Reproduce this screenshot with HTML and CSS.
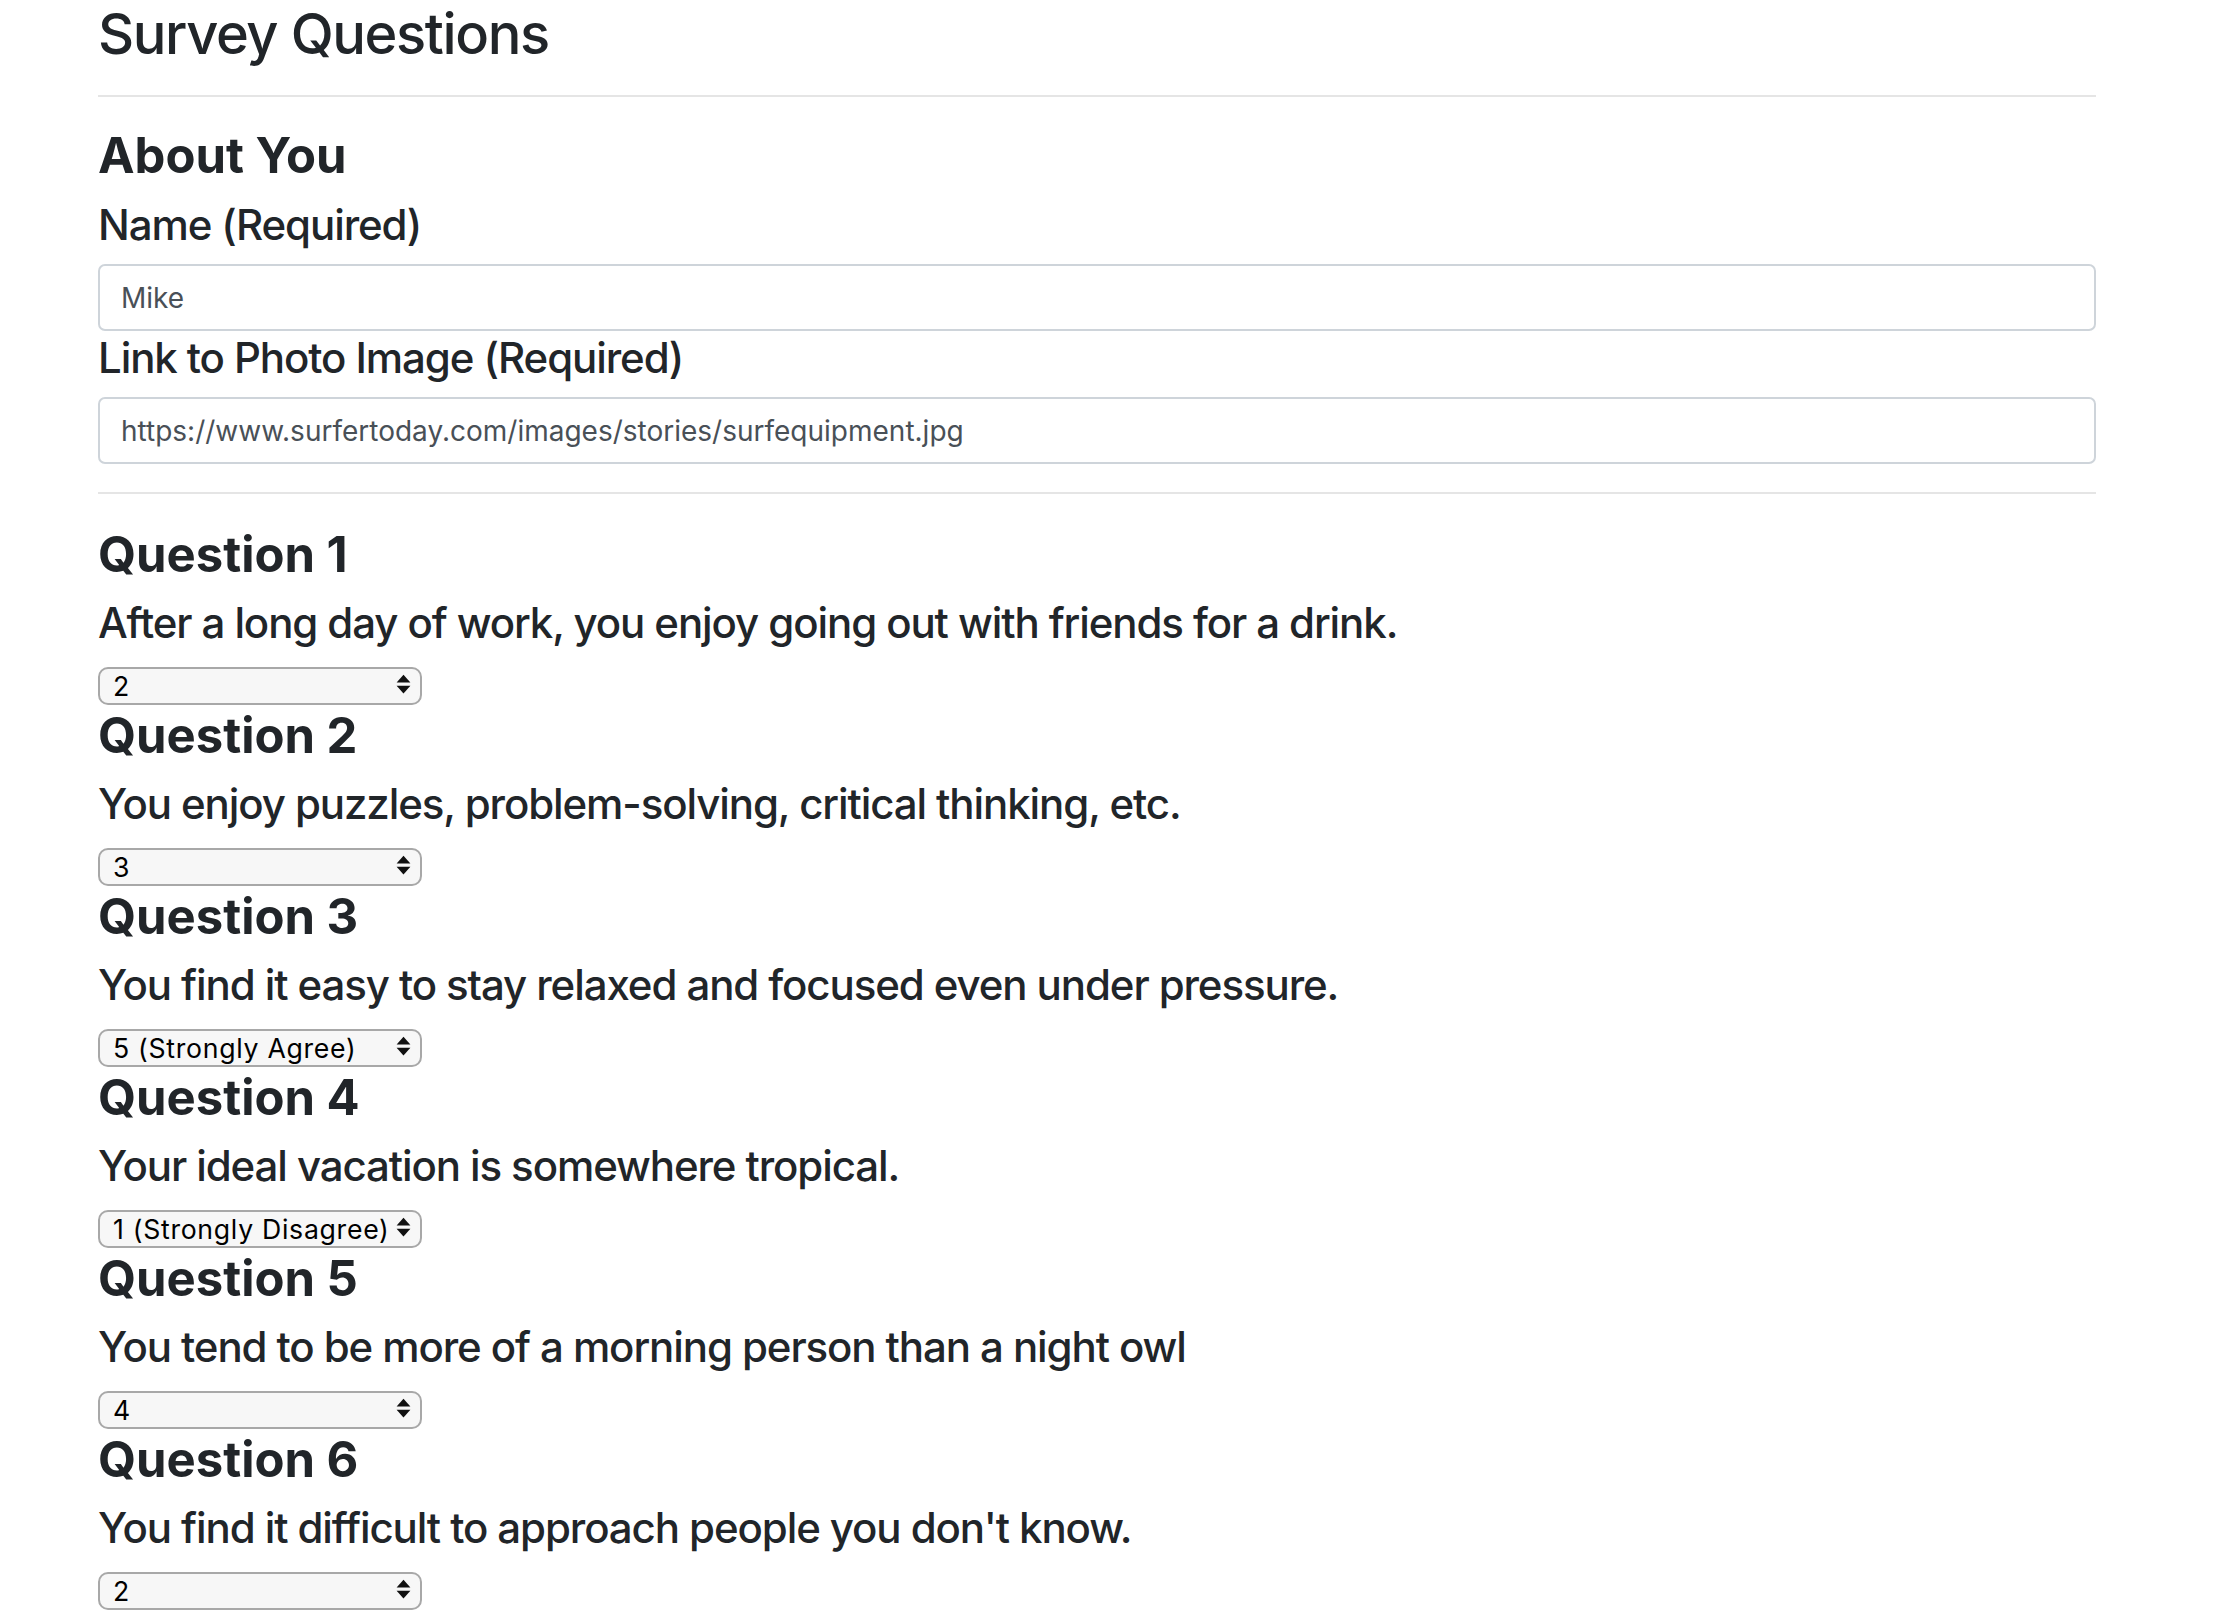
FILE: index.html
```html
<!DOCTYPE html>
<html lang="en">
<head>
<meta charset="utf-8">
<title>Survey Questions</title>
<link rel="stylesheet" href="styles.css">
</head>
<body>
<div class="container">
  <h2 class="page-title">Survey Questions</h2>
  <hr class="rule">
  <h3 class="section-title">About You</h3>
  <h4 class="field-label">Name (Required)</h4>
  <input class="field" type="text" value="Mike">
  <h4 class="field-label">Link to Photo Image (Required)</h4>
  <input class="field" type="text" value="https://www.surfertoday.com/images/stories/surfequipment.jpg">
  <hr class="rule rule-last">

  <div class="question">
    <h3 class="question-title">Question 1</h3>
    <h4 class="question-text">After a long day of work, you enjoy going out with friends for a drink.</h4>
    <div class="select-row">
      <div class="select-wrap">
        <select class="choice">
          <option>1 (Strongly Disagree)</option>
          <option selected>2</option>
          <option>3</option>
          <option>4</option>
          <option>5 (Strongly Agree)</option>
        </select>
        <svg class="arrows" width="15" height="21" viewBox="0 0 15 21"><polygon points="0.6,8.6 7.5,0.8 14.4,8.6"/><polygon points="0.6,11.8 14.4,11.8 7.5,19.6"/></svg>
      </div>
    </div>
  </div>

  <div class="question">
    <h3 class="question-title">Question 2</h3>
    <h4 class="question-text">You enjoy puzzles, problem-solving, critical thinking, etc.</h4>
    <div class="select-row">
      <div class="select-wrap">
        <select class="choice">
          <option>1 (Strongly Disagree)</option>
          <option>2</option>
          <option selected>3</option>
          <option>4</option>
          <option>5 (Strongly Agree)</option>
        </select>
        <svg class="arrows" width="15" height="21" viewBox="0 0 15 21"><polygon points="0.6,8.6 7.5,0.8 14.4,8.6"/><polygon points="0.6,11.8 14.4,11.8 7.5,19.6"/></svg>
      </div>
    </div>
  </div>

  <div class="question">
    <h3 class="question-title">Question 3</h3>
    <h4 class="question-text">You find it easy to stay relaxed and focused even under pressure.</h4>
    <div class="select-row">
      <div class="select-wrap">
        <select class="choice">
          <option>1 (Strongly Disagree)</option>
          <option>2</option>
          <option>3</option>
          <option>4</option>
          <option selected>5 (Strongly Agree)</option>
        </select>
        <svg class="arrows" width="15" height="21" viewBox="0 0 15 21"><polygon points="0.6,8.6 7.5,0.8 14.4,8.6"/><polygon points="0.6,11.8 14.4,11.8 7.5,19.6"/></svg>
      </div>
    </div>
  </div>

  <div class="question">
    <h3 class="question-title">Question 4</h3>
    <h4 class="question-text">Your ideal vacation is somewhere tropical.</h4>
    <div class="select-row">
      <div class="select-wrap">
        <select class="choice">
          <option selected>1 (Strongly Disagree)</option>
          <option>2</option>
          <option>3</option>
          <option>4</option>
          <option>5 (Strongly Agree)</option>
        </select>
        <svg class="arrows" width="15" height="21" viewBox="0 0 15 21"><polygon points="0.6,8.6 7.5,0.8 14.4,8.6"/><polygon points="0.6,11.8 14.4,11.8 7.5,19.6"/></svg>
      </div>
    </div>
  </div>

  <div class="question">
    <h3 class="question-title">Question 5</h3>
    <h4 class="question-text">You tend to be more of a morning person than a night owl</h4>
    <div class="select-row">
      <div class="select-wrap">
        <select class="choice">
          <option>1 (Strongly Disagree)</option>
          <option>2</option>
          <option>3</option>
          <option selected>4</option>
          <option>5 (Strongly Agree)</option>
        </select>
        <svg class="arrows" width="15" height="21" viewBox="0 0 15 21"><polygon points="0.6,8.6 7.5,0.8 14.4,8.6"/><polygon points="0.6,11.8 14.4,11.8 7.5,19.6"/></svg>
      </div>
    </div>
  </div>

  <div class="question">
    <h3 class="question-title">Question 6</h3>
    <h4 class="question-text">You find it difficult to approach people you don't know.</h4>
    <div class="select-row">
      <div class="select-wrap">
        <select class="choice">
          <option>1 (Strongly Disagree)</option>
          <option selected>2</option>
          <option>3</option>
          <option>4</option>
          <option>5 (Strongly Agree)</option>
        </select>
        <svg class="arrows" width="15" height="21" viewBox="0 0 15 21"><polygon points="0.6,8.6 7.5,0.8 14.4,8.6"/><polygon points="0.6,11.8 14.4,11.8 7.5,19.6"/></svg>
      </div>
    </div>
  </div>
</div>
</body>
</html>
```

FILE: styles.css
```css
html, body {
  margin: 0;
  padding: 0;
  background: #ffffff;
}

body {
  font-family: Inter, "Noto Sans", "Liberation Sans", sans-serif;
  color: #212529;
  font-size: 28px;
}

.container {
  width: 1998px;
  padding-left: 98px;
  display: flex;
  flex-direction: column;
}

.page-title {
  margin: 0;
  padding-top: 1px;
  font-size: 56px;
  line-height: 66.2px;
  font-weight: 500;
  letter-spacing: -0.025em;
}

.rule {
  margin: 28px 0;
  border: 0;
  border-top: 2px solid rgba(0, 0, 0, 0.1);
  height: 0;
  width: 100%;
}

.rule-last {
  margin-bottom: 29.5px;
}

.section-title,
.question-title {
  margin: 0 0 14px 0;
  font-size: 49px;
  font-weight: 700;
}

.section-title {
  padding-top: 3px;
  line-height: 55.8px;
}

.question-title {
  padding-top: 3px;
  line-height: 55.8px;
}

.field-label {
  margin: 0 0 14px 0;
  padding-top: 1.5px;
  font-size: 42px;
  line-height: 50.5px;
  font-weight: 500;
  letter-spacing: -0.026em;
}

.field {
  display: block;
  box-sizing: border-box;
  width: 100%;
  height: 67px;
  margin: 0;
  padding: 10px 21px;
  font-family: inherit;
  font-size: 28px;
  line-height: 42px;
  color: #495057;
  background: #ffffff;
  border: 2px solid #ced4da;
  border-radius: 7px;
  outline: none;
}

.question {
  display: flex;
  flex-direction: column;
}

.question-text {
  margin: 0 0 14px 0;
  padding-top: 3px;
  font-size: 42px;
  line-height: 47.4px;
  font-weight: 500;
  letter-spacing: -0.026em;
}

.select-row {
  height: 43.8px;
  padding-top: 5.8px;
  box-sizing: border-box;
}

.select-wrap {
  position: relative;
  width: 324px;
  height: 38px;
}

.choice {
  -webkit-appearance: none;
  appearance: none;
  box-sizing: border-box;
  width: 324px;
  height: 38px;
  margin: 0;
  padding: 0 30px 0 13px;
  font-family: Inter, "Noto Sans", "Liberation Sans", sans-serif;
  font-size: 26.67px;
  line-height: 34px;
  letter-spacing: 0.7px;
  color: #000000;
  background: #f7f7f7;
  border: 2px solid #a8a8a8;
  border-radius: 10px;
  outline: none;
}

.arrows {
  position: absolute;
  left: 298px;
  top: 7.5px;
  fill: #111111;
  pointer-events: none;
}
```
